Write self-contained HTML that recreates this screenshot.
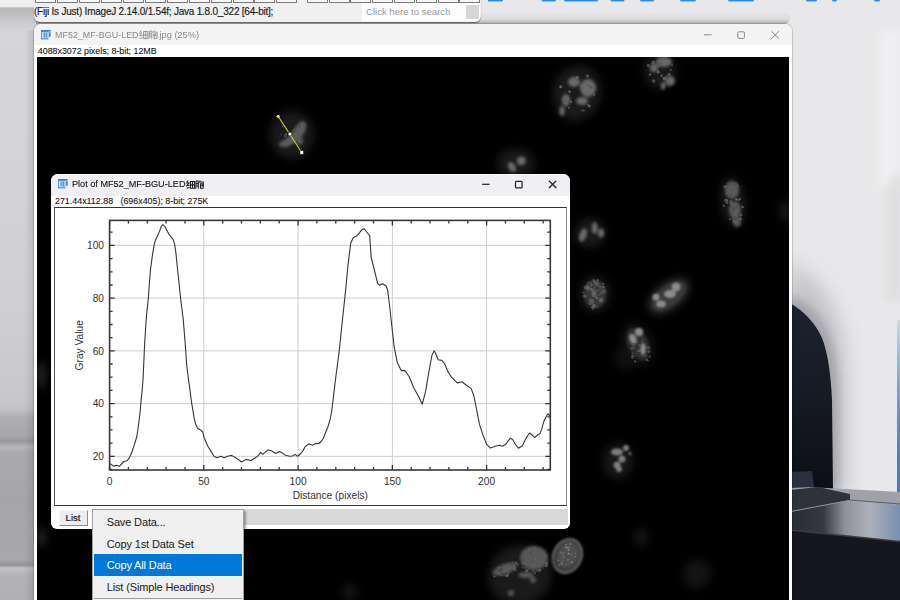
<!DOCTYPE html>
<html><head><meta charset="utf-8">
<style>
*{box-sizing:border-box}
html,body{margin:0;padding:0}
body{width:900px;height:600px;overflow:hidden;position:relative;background:#e4e4e6;font-family:"Liberation Sans",sans-serif}
.a{position:absolute}
.t{position:absolute;white-space:pre;line-height:1}
</style></head><body>

<!-- desktop left strip -->
<div class="a" style="left:0;top:0;width:40px;height:600px;background:linear-gradient(#d6d6da 0px,#d4d4d8 150px,#d0d0d4 300px,#c8c8cc 400px,#c2c2c6 410px,#aeaeb2 418px,#a8a8ac 436px,#98989c 441px,#b6b6ba 447px,#aaaaae 453px,#a6a6aa 500px,#a8a8ac 560px,#949498 565px,#c2c2c6 568px,#b4b4b8 575px,#b0b0b4 600px)"></div><div class="a" style="left:24px;top:22px;width:12px;height:578px;background:linear-gradient(90deg,rgba(0,0,0,0),rgba(0,0,0,.12))"></div>
<div class="a" style="left:0;top:0;width:40px;height:30px;background:linear-gradient(#f0f0f0 0px,#eeeeee 6.5px,#b8b8b8 8px,#bababb 11px,#c4c4c6 18px,#cdcdd0 24px,#d4d4d8 30px)"></div>


<!-- desktop right -->
<div class="a" style="left:480px;top:0;width:420px;height:30px;background:#e8e8ea"></div>
<svg class="a" style="left:0;top:0" width="900" height="600" viewBox="0 0 900 600">
<defs>
<filter id="sh8" color-interpolation-filters="sRGB" filterUnits="userSpaceOnUse" x="0" y="0" width="900" height="600"><feGaussianBlur stdDeviation="9"/></filter>
<filter id="sh2" color-interpolation-filters="sRGB" filterUnits="userSpaceOnUse" x="0" y="0" width="900" height="600"><feGaussianBlur stdDeviation="1.2"/></filter><filter id="sh4" color-interpolation-filters="sRGB" filterUnits="userSpaceOnUse" x="0" y="0" width="900" height="600"><feGaussianBlur stdDeviation="4"/></filter><filter id="sh1" color-interpolation-filters="sRGB" filterUnits="userSpaceOnUse" x="0" y="0" width="900" height="600"><feGaussianBlur stdDeviation="0.7"/></filter>
<linearGradient id="archg" x1="0" x2="0" y1="0" y2="1"><stop offset="0" stop-color="#1e2230"/><stop offset="0.5" stop-color="#161a24"/><stop offset="1" stop-color="#0c0e14"/></linearGradient><linearGradient id="blueg" x1="0" x2="0" y1="0" y2="1"><stop offset="0" stop-color="#d0d8e4"/><stop offset="0.3" stop-color="#7aa0d0"/><stop offset="0.6" stop-color="#4a80c8"/><stop offset="1" stop-color="#3a76c4"/></linearGradient><linearGradient id="wpan" x1="0" x2="1" y1="0" y2="0"><stop offset="0" stop-color="#e6e6e8"/><stop offset="0.5" stop-color="#eeeeef"/><stop offset="1" stop-color="#e2e2e4"/></linearGradient>
<linearGradient id="surf" x1="0" x2="1" y1="0" y2="0"><stop offset="0" stop-color="#2a2c34"/><stop offset="0.3" stop-color="#363840"/><stop offset="0.5" stop-color="#8e9199"/><stop offset="0.72" stop-color="#adb0b8"/><stop offset="1" stop-color="#7890b0"/></linearGradient>
</defs>
<rect x="790" y="20" width="110" height="580" fill="#e8e8ea"/>
<rect x="878" y="30" width="24" height="160" fill="#efeff1" filter="url(#sh4)"/><path d="M902 170 Q890 178 886 192 L886 300 L902 300 Z" fill="#dedee0" filter="url(#sh4)"/>
<!-- arch shadow -->
<path d="M790 262 Q830 282 842 330 Q848 362 848 400 L848 492 L790 492 Z" fill="#c6c6ca" filter="url(#sh8)"/>
<path d="M790 294 Q820 308 830 336 Q838 360 838 400 L838 492 L790 492 Z" fill="#a4a4aa" filter="url(#sh4)"/>
<!-- arch dark -->
<path d="M790 303 Q812 316 822 338 Q830 358 832 400 L833 492 L790 492 Z" fill="url(#archg)" filter="url(#sh1)"/>
<!-- blue strip -->
<rect x="897" y="320" width="3" height="225" fill="url(#blueg)"/>
<!-- platform -->
<path d="M790 486 L900 492 L900 505 L790 500 Z" fill="#9ea1a8"/>
<path d="M790 490 L818 487 L850 494 L850 500 L790 512 Z" fill="#30323a"/>
<path d="M790 472 L812 471 L814 487 L790 488 Z" fill="#2a3040"/>
<path d="M790 512 L850 500 L900 505 L900 541 L790 530 Z" fill="url(#surf)"/>
<path d="M790 511.6 L849.6 500.4" stroke="#8a8e98" stroke-width="1"/>
<path d="M850 500 L900 504" stroke="#4a4c52" stroke-width="0.8"/>
<path d="M790 530 L900 541.5 L900 600 L790 600 Z" fill="#16171d"/>
<path d="M790 530 L900 541.5" stroke="#3a3c44" stroke-width="1.5"/>
</svg>

<!-- blue letters -->
<svg class="a" style="left:0;top:0" width="900" height="10" viewBox="0 0 900 10"><g fill="#2f8ae0"><rect x="487.7" y="-3" width="15.3" height="4.6" rx="1.5"/><rect x="541.5" y="-3" width="14.5" height="4.6" rx="1.5"/><rect x="564" y="-3" width="34.0" height="4.6" rx="1.5"/><rect x="610.5" y="-3" width="14.0" height="4.6" rx="1.5"/><rect x="640" y="-3" width="14.0" height="4.6" rx="1.5"/><rect x="680" y="-3" width="16.0" height="4.6" rx="1.5"/><rect x="728" y="-3" width="26.0" height="4.6" rx="1.5"/><rect x="806" y="-3" width="11.0" height="4.6" rx="1.5"/><rect x="832" y="-3" width="5.0" height="4.6" rx="1.5"/><rect x="874" y="-3" width="6.0" height="4.6" rx="1.5"/></g></svg>
<div class="a" style="left:36px;top:12px;width:754px;height:12px;border-radius:0 0 6px 0;background:linear-gradient(rgba(0,0,0,0),rgba(0,0,0,.06) 60%,rgba(0,0,0,.25))"></div>
<!-- ImageJ main toolbar window -->
<div class="a" id="ij" style="left:34px;top:-6px;width:447px;height:28px;background:#f0f0f0;border-radius:0 0 6px 6px;box-shadow:0 1px 1px rgba(0,0,0,.45)"></div>
<div class="a" style="left:35.0px;top:-4px;width:21px;height:6.5px;border:1px solid #7a7a7a;border-top:none;border-radius:0 0 1px 1px;background:#f7f7f7"></div>
<div class="a" style="left:56.9px;top:-4px;width:21px;height:6.5px;border:1px solid #7a7a7a;border-top:none;border-radius:0 0 1px 1px;background:#f7f7f7"></div>
<div class="a" style="left:78.9px;top:-4px;width:21px;height:6.5px;border:1px solid #7a7a7a;border-top:none;border-radius:0 0 1px 1px;background:#f7f7f7"></div>
<div class="a" style="left:100.8px;top:-4px;width:21px;height:6.5px;border:1px solid #7a7a7a;border-top:none;border-radius:0 0 1px 1px;background:#f7f7f7"></div>
<div class="a" style="left:122.8px;top:-4px;width:21px;height:6.5px;border:1px solid #7a7a7a;border-top:none;border-radius:0 0 1px 1px;background:#f7f7f7"></div>
<div class="a" style="left:144.7px;top:-4px;width:21px;height:6.5px;border:1px solid #7a7a7a;border-top:none;border-radius:0 0 1px 1px;background:#f7f7f7"></div>
<div class="a" style="left:166.6px;top:-4px;width:21px;height:6.5px;border:1px solid #7a7a7a;border-top:none;border-radius:0 0 1px 1px;background:#f7f7f7"></div>
<div class="a" style="left:188.6px;top:-4px;width:21px;height:6.5px;border:1px solid #7a7a7a;border-top:none;border-radius:0 0 1px 1px;background:#f7f7f7"></div>
<div class="a" style="left:210.5px;top:-4px;width:21px;height:6.5px;border:1px solid #7a7a7a;border-top:none;border-radius:0 0 1px 1px;background:#f7f7f7"></div>
<div class="a" style="left:232.5px;top:-4px;width:21px;height:6.5px;border:1px solid #7a7a7a;border-top:none;border-radius:0 0 1px 1px;background:#f7f7f7"></div>
<div class="a" style="left:254.4px;top:-4px;width:21px;height:6.5px;border:1px solid #7a7a7a;border-top:none;border-radius:0 0 1px 1px;background:#f7f7f7"></div>
<div class="a" style="left:276.3px;top:-4px;width:21px;height:6.5px;border:1px solid #7a7a7a;border-top:none;border-radius:0 0 1px 1px;background:#f7f7f7"></div>
<div class="a" style="left:306.7px;top:-4px;width:21px;height:6.5px;border:1px solid #7a7a7a;border-top:none;border-radius:0 0 1px 1px;background:#f7f7f7"></div>
<div class="a" style="left:328.5px;top:-4px;width:21px;height:6.5px;border:1px solid #7a7a7a;border-top:none;border-radius:0 0 1px 1px;background:#f7f7f7"></div>
<div class="a" style="left:350.3px;top:-4px;width:21px;height:6.5px;border:1px solid #7a7a7a;border-top:none;border-radius:0 0 1px 1px;background:#f7f7f7"></div>
<div class="a" style="left:372.1px;top:-4px;width:21px;height:6.5px;border:1px solid #7a7a7a;border-top:none;border-radius:0 0 1px 1px;background:#f7f7f7"></div>
<div class="a" style="left:393.9px;top:-4px;width:21px;height:6.5px;border:1px solid #7a7a7a;border-top:none;border-radius:0 0 1px 1px;background:#f7f7f7"></div>
<div class="a" style="left:415.7px;top:-4px;width:21px;height:6.5px;border:1px solid #7a7a7a;border-top:none;border-radius:0 0 1px 1px;background:#f7f7f7"></div>
<div class="a" style="left:437.5px;top:-4px;width:21px;height:6.5px;border:1px solid #7a7a7a;border-top:none;border-radius:0 0 1px 1px;background:#f7f7f7"></div>
<div class="a" style="left:459.3px;top:-4px;width:21px;height:6.5px;border:1px solid #7a7a7a;border-top:none;border-radius:0 0 1px 1px;background:#f7f7f7"></div>
<div class="t" style="left:34px;top:6.9px;font-size:10px;letter-spacing:-0.22px;color:#1a1a1a;-webkit-text-stroke:0.15px #1a1a1a">(Fiji Is Just) ImageJ 2.14.0/1.54f; Java 1.8.0_322 [64-bit];</div>
<div class="a" style="left:362px;top:3px;width:118px;height:18px;background:#fdfdfd;border-radius:0 0 5px 0"></div>
<div class="a" style="left:466px;top:5px;width:13px;height:14px;background:#d6d6d6"></div>
<div class="t" style="left:366px;top:7.2px;font-size:9.56px;color:#9a9a9a">Click here to search</div>

<!-- image window -->
<div class="a" id="imgwin" style="left:34px;top:24px;width:758px;height:590px;background:#ffffff;border-radius:7px 7px 0 0;box-shadow:0 0 0 0.7px rgba(0,0,0,.16),0 0 3px rgba(0,0,0,.14)">
  <div class="a" style="left:0;top:0;width:758px;height:21px;background:#f3f3f3;border-radius:7px 7px 0 0"></div>
  <div class="a" style="left:3px;top:33px;width:752px;height:560px;background:#000"></div>
</div>


<!-- cells -->
<svg class="a" style="left:0;top:0" width="900" height="600" viewBox="0 0 900 600">
<defs>
<filter id="b3" color-interpolation-filters="sRGB" filterUnits="userSpaceOnUse" x="0" y="0" width="900" height="600"><feGaussianBlur stdDeviation="4.5"/></filter>
<filter id="b15" color-interpolation-filters="sRGB" filterUnits="userSpaceOnUse" x="0" y="0" width="900" height="600"><feGaussianBlur stdDeviation="1.5"/></filter>
<filter id="b05" color-interpolation-filters="sRGB" filterUnits="userSpaceOnUse" x="0" y="0" width="900" height="600"><feGaussianBlur stdDeviation="0.75"/></filter>
<filter id="b08" color-interpolation-filters="sRGB" filterUnits="userSpaceOnUse" x="0" y="0" width="900" height="600"><feGaussianBlur stdDeviation="0.8"/></filter>
<clipPath id="imgclip"><rect x="37" y="57" width="752" height="543"/></clipPath>
</defs>
<g clip-path="url(#imgclip)">
<!-- cell with line -->
<g filter="url(#b3)"><ellipse cx="292" cy="135" rx="22" ry="24" fill="#1a1a1a"/></g>
<g filter="url(#b15)" fill="#5c5c5c"><path d="M302 121 Q308 122 306 128 Q305 134 300 138 Q296 143 291 145 Q284 149 280 146 Q277 144 282 141 Q289 137 292 133 Q295 127 298 124Z"/><ellipse cx="287" cy="144" rx="6" ry="2.5" transform="rotate(-20 287 144)"/><ellipse cx="300" cy="141" rx="3" ry="4"/></g>
<!-- cell A -->
<g filter="url(#b3)"><ellipse cx="577" cy="93" rx="24" ry="28" transform="rotate(15 577 93)" fill="#1a1a1a"/></g>
<g filter="url(#b15)" fill="#6a6a6a"><ellipse cx="588" cy="88" rx="8" ry="9"/><ellipse cx="574" cy="82" rx="6" ry="5"/><ellipse cx="566" cy="100" rx="4" ry="6"/><ellipse cx="582" cy="101" rx="6" ry="4"/><ellipse cx="562" cy="111" rx="2.5" ry="5"/></g>
<!-- cell B -->
<g filter="url(#b3)"><ellipse cx="660" cy="70" rx="16" ry="18" fill="#1a1a1a"/></g>
<g filter="url(#b15)" fill="#6a6a6a"><ellipse cx="664" cy="62" rx="8" ry="5"/><ellipse cx="670" cy="81" rx="5" ry="5"/><ellipse cx="654" cy="68" rx="4" ry="4"/><ellipse cx="663" cy="86" rx="2" ry="4"/></g>
<!-- cell C -->
<g filter="url(#b3)"><ellipse cx="516" cy="163" rx="19" ry="14" fill="#1a1a1a"/></g>
<g filter="url(#b15)" fill="#6a6a6a"><circle cx="521.3" cy="160.9" r="4.5"/><ellipse cx="512" cy="167" rx="3.5" ry="5.5" transform="rotate(-30 512 167)"/></g>
<!-- cell D -->
<g filter="url(#b3)"><ellipse cx="733" cy="202" rx="12" ry="25" transform="rotate(-8 733 202)" fill="#1a1a1a"/></g>
<g filter="url(#b15)" fill="#5a5a5a"><ellipse cx="732" cy="190" rx="7" ry="9"/><ellipse cx="735" cy="210" rx="6" ry="9"/><ellipse cx="737" cy="222" rx="4" ry="5"/></g>
<g filter="url(#b3)"><ellipse cx="786" cy="211" rx="6" ry="11" fill="#1a1a1a"/></g>
<!-- cell E -->
<g filter="url(#b3)"><ellipse cx="590" cy="233" rx="15" ry="15" fill="#1a1a1a"/></g>
<g filter="url(#b15)" fill="#6a6a6a"><ellipse cx="583" cy="235" rx="3.5" ry="7" transform="rotate(20 583 235)"/><ellipse cx="594.7" cy="228" rx="3" ry="6"/><ellipse cx="601" cy="233" rx="3" ry="4.5"/></g>
<!-- cell F -->
<g filter="url(#b3)"><ellipse cx="595" cy="294" rx="15" ry="18" fill="#1a1a1a"/></g>
<g filter="url(#b15)" fill="#363636"><ellipse cx="595" cy="294" rx="11" ry="14"/></g>
<g filter="url(#b08)" fill="#7a7a7a"><circle cx="588" cy="288" r="2"/><circle cx="597" cy="284" r="1.8"/><circle cx="601" cy="300" r="2"/><circle cx="592" cy="302" r="1.8"/><circle cx="594" cy="293" r="2.2"/><circle cx="604" cy="291" r="1.5"/></g>
<!-- cell G -->
<g filter="url(#b3)"><ellipse cx="669" cy="296" rx="24" ry="13" transform="rotate(-38 669 296)" fill="#303030"/></g>
<g filter="url(#b15)"><ellipse cx="669" cy="296" rx="20" ry="10" transform="rotate(-38 669 296)" fill="#3a3a3a"/></g>
<g filter="url(#b08)" fill="#8c8c8c"><circle cx="656" cy="297" r="3.5"/><ellipse cx="661" cy="304" rx="5" ry="3.5"/><ellipse cx="670" cy="294" rx="6" ry="4"/><circle cx="676" cy="287" r="4.5"/></g>
<!-- cell H -->
<g filter="url(#b3)"><ellipse cx="626" cy="358" rx="12" ry="12" fill="#0f0f0f"/><ellipse cx="638" cy="344" rx="15" ry="22" transform="rotate(-25 638 344)" fill="#121212"/></g>
<g filter="url(#b15)" fill="#303030"><ellipse cx="638" cy="344" rx="10" ry="17" transform="rotate(-25 638 344)"/></g>
<g filter="url(#b08)" fill="#8a8a8a"><circle cx="639" cy="332" r="4"/><ellipse cx="633" cy="339" rx="3.5" ry="5.5" transform="rotate(-20 633 339)"/><ellipse cx="643" cy="349" rx="2.8" ry="6"/></g>
<!-- cell I -->
<g filter="url(#b3)"><ellipse cx="618" cy="461" rx="15" ry="18" fill="#181818"/></g>
<g filter="url(#b08)" fill="#7e7e7e"><ellipse cx="617" cy="452" rx="6" ry="3.5"/><circle cx="626" cy="448" r="3"/><circle cx="622" cy="459" r="3.5"/><circle cx="617" cy="465" r="3.5"/><circle cx="619" cy="469" r="3"/><circle cx="630" cy="453.5" r="1.5"/></g>
<!-- cell J -->
<g filter="url(#b15)"><ellipse cx="567.3" cy="556" rx="15" ry="18.5" transform="rotate(25 567.3 556)" fill="#3c3c3c"/></g>
<g filter="url(#b08)"><ellipse cx="567.3" cy="556" rx="13.5" ry="17" transform="rotate(25 567.3 556)" fill="none" stroke="#5e5e5e" stroke-width="2.2"/><ellipse cx="568" cy="555" rx="10" ry="13" transform="rotate(25 568 555)" fill="#4e4e4e"/></g>
<!-- cell K -->
<g filter="url(#b3)"><ellipse cx="520" cy="575" rx="32" ry="30" transform="rotate(-20 520 575)" fill="#1a1a1a"/></g>
<g filter="url(#b15)" fill="#585858"><ellipse cx="534" cy="558" rx="14" ry="12"/><ellipse cx="505" cy="569" rx="13" ry="5" transform="rotate(-20 505 569)"/><circle cx="533" cy="580" r="3"/><circle cx="511" cy="593" r="3"/><ellipse cx="526" cy="575" rx="8" ry="3"/></g>
<!-- speckles -->
<g filter="url(#b05)"><circle cx="590.8" cy="282.8" r="1.5" fill="#484848"/><circle cx="597.0" cy="307.1" r="1.0" fill="#484848"/><circle cx="593.4" cy="280.2" r="0.9" fill="#606060"/><circle cx="584.4" cy="296.1" r="1.7" fill="#484848"/><circle cx="596.9" cy="290.7" r="1.8" fill="#484848"/><circle cx="596.4" cy="282.3" r="1.2" fill="#484848"/><circle cx="596.7" cy="295.9" r="1.5" fill="#484848"/><circle cx="597.0" cy="298.4" r="1.2" fill="#484848"/><circle cx="596.5" cy="297.8" r="1.3" fill="#606060"/><circle cx="601.7" cy="292.9" r="1.7" fill="#585858"/><circle cx="590.2" cy="303.4" r="1.5" fill="#505050"/><circle cx="585.0" cy="287.6" r="1.3" fill="#585858"/><circle cx="600.5" cy="287.2" r="1.8" fill="#484848"/><circle cx="595.3" cy="283.3" r="1.1" fill="#606060"/><circle cx="593.1" cy="308.8" r="0.9" fill="#585858"/><circle cx="591.2" cy="289.2" r="1.3" fill="#606060"/><circle cx="589.5" cy="300.3" r="0.9" fill="#585858"/><circle cx="602.7" cy="287.1" r="1.2" fill="#585858"/><circle cx="583.5" cy="292.8" r="1.0" fill="#484848"/><circle cx="594.8" cy="285.0" r="1.1" fill="#505050"/><circle cx="592.5" cy="307.3" r="1.3" fill="#505050"/><circle cx="593.8" cy="295.6" r="1.7" fill="#606060"/><circle cx="603.7" cy="286.9" r="1.2" fill="#585858"/><circle cx="599.4" cy="290.2" r="1.0" fill="#484848"/><circle cx="587.2" cy="285.4" r="1.0" fill="#606060"/><circle cx="602.9" cy="283.8" r="1.1" fill="#505050"/><circle cx="593.1" cy="289.8" r="1.4" fill="#505050"/><circle cx="599.6" cy="294.5" r="1.4" fill="#484848"/><circle cx="594.0" cy="305.9" r="1.8" fill="#606060"/><circle cx="592.6" cy="290.6" r="1.3" fill="#606060"/><circle cx="588.0" cy="283.2" r="1.1" fill="#484848"/><circle cx="585.5" cy="296.1" r="1.3" fill="#585858"/><circle cx="597.7" cy="280.3" r="1.0" fill="#606060"/><circle cx="586.6" cy="286.1" r="1.1" fill="#585858"/><circle cx="594.4" cy="281.7" r="1.3" fill="#606060"/><circle cx="594.5" cy="288.0" r="0.9" fill="#585858"/><circle cx="600.8" cy="293.3" r="1.5" fill="#484848"/><circle cx="591.7" cy="300.1" r="1.7" fill="#585858"/><circle cx="599.7" cy="286.4" r="1.2" fill="#505050"/><circle cx="591.5" cy="285.1" r="1.3" fill="#585858"/><circle cx="736.4" cy="206.6" r="1.6" fill="#505050"/><circle cx="741.0" cy="215.0" r="1.5" fill="#505050"/><circle cx="727.0" cy="202.5" r="1.5" fill="#484848"/><circle cx="738.6" cy="200.0" r="1.0" fill="#585858"/><circle cx="734.6" cy="221.2" r="1.8" fill="#585858"/><circle cx="731.4" cy="195.0" r="1.3" fill="#484848"/><circle cx="733.5" cy="208.7" r="1.6" fill="#484848"/><circle cx="732.1" cy="211.5" r="1.0" fill="#505050"/><circle cx="732.5" cy="208.1" r="0.9" fill="#606060"/><circle cx="733.8" cy="212.7" r="0.9" fill="#505050"/><circle cx="724.2" cy="186.7" r="1.0" fill="#606060"/><circle cx="736.9" cy="185.7" r="1.6" fill="#606060"/><circle cx="735.2" cy="195.0" r="1.3" fill="#505050"/><circle cx="735.1" cy="184.1" r="1.5" fill="#505050"/><circle cx="734.0" cy="218.4" r="1.6" fill="#505050"/><circle cx="734.6" cy="213.5" r="1.1" fill="#606060"/><circle cx="740.2" cy="218.7" r="1.5" fill="#606060"/><circle cx="735.5" cy="218.2" r="1.6" fill="#484848"/><circle cx="736.3" cy="186.0" r="0.9" fill="#484848"/><circle cx="733.1" cy="194.3" r="1.3" fill="#606060"/><circle cx="736.2" cy="184.0" r="1.4" fill="#505050"/><circle cx="724.7" cy="201.0" r="0.8" fill="#484848"/><circle cx="732.6" cy="207.1" r="1.3" fill="#505050"/><circle cx="736.5" cy="199.4" r="1.3" fill="#606060"/><circle cx="731.6" cy="191.0" r="1.3" fill="#585858"/><circle cx="726.8" cy="200.5" r="1.2" fill="#606060"/><circle cx="729.2" cy="183.5" r="1.0" fill="#484848"/><circle cx="726.1" cy="194.2" r="0.9" fill="#505050"/><circle cx="742.6" cy="207.0" r="1.2" fill="#585858"/><circle cx="730.9" cy="201.7" r="1.8" fill="#505050"/><circle cx="725.9" cy="200.0" r="1.3" fill="#585858"/><circle cx="730.6" cy="196.0" r="0.9" fill="#585858"/><circle cx="723.8" cy="205.7" r="1.2" fill="#484848"/><circle cx="730.8" cy="203.1" r="1.1" fill="#484848"/><circle cx="729.9" cy="219.2" r="0.9" fill="#585858"/><circle cx="726.2" cy="186.5" r="1.2" fill="#585858"/><circle cx="731.4" cy="203.9" r="1.3" fill="#606060"/><circle cx="734.5" cy="183.6" r="0.9" fill="#505050"/><circle cx="728.9" cy="183.6" r="1.7" fill="#484848"/><circle cx="739.9" cy="199.0" r="1.1" fill="#606060"/><circle cx="671.9" cy="65.0" r="0.9" fill="#505050"/><circle cx="653.3" cy="62.4" r="1.7" fill="#585858"/><circle cx="660.9" cy="63.2" r="1.2" fill="#505050"/><circle cx="653.6" cy="81.1" r="1.8" fill="#484848"/><circle cx="661.4" cy="62.7" r="1.3" fill="#606060"/><circle cx="658.1" cy="71.9" r="1.6" fill="#606060"/><circle cx="652.0" cy="63.9" r="1.0" fill="#505050"/><circle cx="657.3" cy="67.4" r="0.9" fill="#505050"/><circle cx="670.6" cy="69.9" r="0.9" fill="#606060"/><circle cx="670.4" cy="77.1" r="1.1" fill="#505050"/><circle cx="665.4" cy="58.4" r="1.0" fill="#585858"/><circle cx="658.5" cy="64.9" r="1.8" fill="#585858"/><circle cx="654.7" cy="67.7" r="0.8" fill="#606060"/><circle cx="648.3" cy="65.4" r="1.5" fill="#505050"/><circle cx="660.1" cy="57.1" r="1.1" fill="#484848"/><circle cx="650.0" cy="74.6" r="1.2" fill="#585858"/><circle cx="654.5" cy="64.0" r="1.4" fill="#505050"/><circle cx="664.4" cy="78.5" r="1.7" fill="#606060"/><circle cx="667.4" cy="78.6" r="1.3" fill="#585858"/><circle cx="666.3" cy="76.3" r="0.8" fill="#606060"/><circle cx="666.5" cy="81.4" r="0.9" fill="#484848"/><circle cx="669.1" cy="74.5" r="1.7" fill="#505050"/><circle cx="663.8" cy="85.8" r="1.2" fill="#606060"/><circle cx="661.6" cy="75.8" r="1.4" fill="#505050"/><circle cx="659.7" cy="57.1" r="1.6" fill="#484848"/><circle cx="587.5" cy="76.0" r="1.4" fill="#585858"/><circle cx="583.8" cy="110.6" r="1.0" fill="#505050"/><circle cx="565.9" cy="96.9" r="1.2" fill="#606060"/><circle cx="585.1" cy="81.4" r="1.3" fill="#585858"/><circle cx="565.7" cy="101.0" r="1.0" fill="#505050"/><circle cx="567.0" cy="98.2" r="1.4" fill="#606060"/><circle cx="569.5" cy="91.8" r="1.2" fill="#606060"/><circle cx="580.9" cy="85.5" r="0.9" fill="#606060"/><circle cx="560.7" cy="86.8" r="1.5" fill="#606060"/><circle cx="588.3" cy="85.2" r="1.1" fill="#585858"/><circle cx="588.1" cy="105.2" r="1.0" fill="#606060"/><circle cx="577.2" cy="77.5" r="1.6" fill="#606060"/><circle cx="571.1" cy="101.8" r="1.1" fill="#606060"/><circle cx="566.7" cy="105.7" r="0.8" fill="#585858"/><circle cx="589.4" cy="106.0" r="1.5" fill="#585858"/><circle cx="569.0" cy="107.7" r="0.9" fill="#606060"/><circle cx="581.9" cy="110.4" r="1.0" fill="#484848"/><circle cx="591.1" cy="87.0" r="1.5" fill="#505050"/><circle cx="594.1" cy="94.7" r="1.1" fill="#585858"/><circle cx="587.7" cy="92.6" r="0.8" fill="#606060"/><circle cx="535.4" cy="565.7" r="0.8" fill="#606060"/><circle cx="532.6" cy="566.6" r="1.3" fill="#585858"/><circle cx="533.6" cy="570.7" r="1.2" fill="#505050"/><circle cx="533.2" cy="555.9" r="1.0" fill="#585858"/><circle cx="531.4" cy="553.2" r="1.2" fill="#606060"/><circle cx="523.4" cy="563.7" r="0.9" fill="#606060"/><circle cx="535.4" cy="558.8" r="1.1" fill="#606060"/><circle cx="532.0" cy="561.2" r="1.0" fill="#505050"/><circle cx="529.6" cy="549.4" r="1.0" fill="#585858"/><circle cx="542.7" cy="552.3" r="0.8" fill="#606060"/><circle cx="530.7" cy="566.4" r="1.0" fill="#585858"/><circle cx="529.5" cy="548.6" r="1.0" fill="#585858"/><circle cx="523.5" cy="560.1" r="1.3" fill="#505050"/><circle cx="530.8" cy="563.8" r="1.1" fill="#585858"/><circle cx="539.9" cy="570.3" r="1.2" fill="#606060"/><circle cx="527.0" cy="549.8" r="0.9" fill="#484848"/><circle cx="546.4" cy="565.8" r="1.3" fill="#606060"/><circle cx="522.4" cy="567.2" r="0.8" fill="#505050"/><circle cx="526.5" cy="570.9" r="1.3" fill="#585858"/><circle cx="546.9" cy="563.3" r="1.2" fill="#606060"/><circle cx="539.6" cy="549.9" r="0.9" fill="#505050"/><circle cx="530.9" cy="552.8" r="1.3" fill="#484848"/><circle cx="535.0" cy="572.9" r="1.0" fill="#585858"/><circle cx="538.0" cy="570.0" r="1.2" fill="#505050"/><circle cx="535.3" cy="547.8" r="1.1" fill="#585858"/><circle cx="544.8" cy="563.8" r="0.9" fill="#505050"/><circle cx="538.7" cy="571.1" r="1.0" fill="#484848"/><circle cx="539.5" cy="565.7" r="1.1" fill="#606060"/><circle cx="525.5" cy="567.7" r="1.4" fill="#484848"/><circle cx="528.7" cy="568.3" r="1.0" fill="#505050"/><circle cx="527.4" cy="570.1" r="0.9" fill="#606060"/><circle cx="537.1" cy="570.3" r="1.2" fill="#484848"/><circle cx="531.0" cy="552.5" r="1.6" fill="#505050"/><circle cx="531.6" cy="565.5" r="0.9" fill="#606060"/><circle cx="546.1" cy="555.6" r="0.9" fill="#606060"/><circle cx="494.4" cy="576.3" r="1.1" fill="#585858"/><circle cx="518.5" cy="564.7" r="0.9" fill="#484848"/><circle cx="499.6" cy="570.4" r="1.6" fill="#484848"/><circle cx="508.7" cy="572.3" r="1.1" fill="#585858"/><circle cx="514.2" cy="566.2" r="0.8" fill="#606060"/><circle cx="498.2" cy="573.4" r="1.2" fill="#585858"/><circle cx="504.1" cy="575.8" r="0.8" fill="#606060"/><circle cx="499.9" cy="573.8" r="1.1" fill="#606060"/><circle cx="516.1" cy="563.2" r="1.4" fill="#585858"/><circle cx="501.7" cy="569.5" r="1.6" fill="#484848"/><circle cx="500.6" cy="574.7" r="1.1" fill="#585858"/><circle cx="501.6" cy="574.4" r="1.3" fill="#484848"/><circle cx="507.2" cy="575.4" r="1.6" fill="#606060"/><circle cx="512.8" cy="562.8" r="1.2" fill="#484848"/><circle cx="514.9" cy="569.8" r="1.5" fill="#505050"/><circle cx="508.1" cy="567.0" r="1.1" fill="#585858"/><circle cx="513.9" cy="568.4" r="1.2" fill="#606060"/><circle cx="511.6" cy="564.7" r="0.9" fill="#484848"/><circle cx="505.7" cy="570.7" r="0.9" fill="#606060"/><circle cx="498.1" cy="567.6" r="0.9" fill="#606060"/><circle cx="566.1" cy="544.6" r="0.9" fill="#7a7a7a"/><circle cx="562.8" cy="554.7" r="1.1" fill="#6a6a6a"/><circle cx="575.3" cy="553.5" r="0.8" fill="#727272"/><circle cx="563.1" cy="560.5" r="0.7" fill="#6a6a6a"/><circle cx="565.2" cy="547.1" r="0.8" fill="#7a7a7a"/><circle cx="566.3" cy="547.9" r="0.9" fill="#7a7a7a"/><circle cx="571.9" cy="562.2" r="1.2" fill="#6a6a6a"/><circle cx="563.7" cy="552.5" r="0.8" fill="#727272"/><circle cx="566.2" cy="564.6" r="0.7" fill="#6a6a6a"/><circle cx="561.7" cy="563.5" r="0.9" fill="#727272"/><circle cx="571.2" cy="562.2" r="0.6" fill="#7a7a7a"/><circle cx="568.4" cy="559.6" r="0.7" fill="#727272"/><circle cx="570.1" cy="543.9" r="1.2" fill="#6a6a6a"/><circle cx="568.1" cy="560.4" r="0.7" fill="#6a6a6a"/><circle cx="574.8" cy="556.6" r="0.8" fill="#7a7a7a"/><circle cx="567.9" cy="547.4" r="1.1" fill="#7a7a7a"/><circle cx="568.7" cy="553.7" r="1.1" fill="#7a7a7a"/><circle cx="567.4" cy="559.7" r="0.7" fill="#6a6a6a"/><circle cx="568.7" cy="549.7" r="1.2" fill="#7a7a7a"/><circle cx="559.5" cy="565.1" r="0.8" fill="#7a7a7a"/><circle cx="575.9" cy="557.2" r="0.6" fill="#727272"/><circle cx="571.8" cy="554.6" r="0.8" fill="#6a6a6a"/><circle cx="570.6" cy="547.4" r="0.7" fill="#6a6a6a"/><circle cx="562.1" cy="564.2" r="0.9" fill="#6a6a6a"/><circle cx="558.2" cy="560.2" r="0.8" fill="#7a7a7a"/><circle cx="571.6" cy="554.0" r="0.9" fill="#6a6a6a"/><circle cx="569.0" cy="546.7" r="0.7" fill="#6a6a6a"/><circle cx="561.0" cy="552.5" r="1.1" fill="#6a6a6a"/><circle cx="560.7" cy="562.3" r="0.6" fill="#727272"/><circle cx="563.5" cy="557.0" r="1.0" fill="#6a6a6a"/><circle cx="648.8" cy="351.6" r="1.3" fill="#505050"/><circle cx="646.8" cy="359.9" r="1.1" fill="#505050"/><circle cx="642.2" cy="341.2" r="0.8" fill="#606060"/><circle cx="633.3" cy="344.3" r="1.4" fill="#505050"/><circle cx="632.4" cy="357.5" r="1.2" fill="#484848"/><circle cx="641.0" cy="346.1" r="0.9" fill="#606060"/><circle cx="642.4" cy="354.8" r="0.8" fill="#606060"/><circle cx="633.6" cy="347.3" r="0.9" fill="#585858"/><circle cx="638.3" cy="350.9" r="0.6" fill="#606060"/><circle cx="638.7" cy="350.9" r="1.1" fill="#606060"/><circle cx="649.8" cy="357.0" r="0.9" fill="#484848"/><circle cx="632.4" cy="353.4" r="0.7" fill="#606060"/><circle cx="641.9" cy="355.9" r="0.6" fill="#505050"/><circle cx="635.2" cy="361.5" r="1.2" fill="#484848"/><circle cx="632.0" cy="355.9" r="0.9" fill="#505050"/><circle cx="644.3" cy="355.9" r="0.7" fill="#505050"/><circle cx="648.6" cy="347.7" r="1.4" fill="#505050"/><circle cx="646.0" cy="356.0" r="0.8" fill="#585858"/><circle cx="639.1" cy="344.8" r="0.9" fill="#585858"/><circle cx="646.8" cy="347.5" r="0.8" fill="#606060"/><circle cx="631.9" cy="348.4" r="1.0" fill="#585858"/><circle cx="634.1" cy="345.4" r="0.9" fill="#585858"/><circle cx="647.9" cy="360.5" r="0.7" fill="#585858"/><circle cx="633.4" cy="356.0" r="1.1" fill="#585858"/><circle cx="647.9" cy="346.9" r="1.0" fill="#484848"/><circle cx="286.0" cy="133.9" r="1.2" fill="#484848"/><circle cx="293.9" cy="129.6" r="1.1" fill="#484848"/><circle cx="285.5" cy="135.8" r="1.3" fill="#484848"/><circle cx="299.7" cy="127.1" r="1.0" fill="#484848"/><circle cx="297.6" cy="138.9" r="0.8" fill="#484848"/><circle cx="294.8" cy="131.4" r="1.0" fill="#4a4a4a"/><circle cx="283.2" cy="126.5" r="1.1" fill="#4a4a4a"/><circle cx="281.3" cy="134.6" r="0.8" fill="#484848"/><circle cx="292.8" cy="130.9" r="0.8" fill="#4a4a4a"/><circle cx="284.9" cy="136.0" r="0.9" fill="#4a4a4a"/><circle cx="297.0" cy="131.8" r="0.6" fill="#4a4a4a"/><circle cx="300.9" cy="139.8" r="0.9" fill="#484848"/></g>
<!-- line roi -->
<path d="M278.3 116.5 L301.7 152.5" stroke="#d2ca2c" stroke-width="1.15"/>
<circle cx="278.1" cy="116.3" r="1.6" fill="#e8e040"/>
<rect x="288.2" y="132.5" width="3.3" height="3.3" fill="#fff" stroke="#222" stroke-width="0.5"/>
<rect x="300" y="150.8" width="3.4" height="3.4" fill="#fff" stroke="#222" stroke-width="0.5"/>
<!-- dim glows -->
<g filter="url(#b3)" fill="#141414"><ellipse cx="641" cy="537" rx="8" ry="9"/><ellipse cx="697" cy="574" rx="14" ry="14"/><ellipse cx="350" cy="592" rx="8" ry="8"/></g><g filter="url(#b3)" fill="#2a2a2a"><ellipse cx="41" cy="537" rx="4" ry="10"/><ellipse cx="41" cy="375" rx="4" ry="14"/></g>
</g>
</svg>

<!-- image window content -->
<svg class="a" style="left:40.8px;top:29.6px" width="10" height="10" viewBox="0 0 10 10"><rect x="0" y="0" width="7.4" height="9.4" fill="#4a90d9"/><rect x="0.9" y="1.8" width="5.8" height="6.4" fill="#d2e6fa"/><rect x="2.6" y="2.4" width="1.1" height="5.2" fill="#4078bc"/><rect x="4.6" y="2.4" width="1.3" height="5.2" fill="#4a84c8"/><rect x="0" y="0" width="9.8" height="1.5" fill="#3f7fc4"/><rect x="8.1" y="2.2" width="1.6" height="4.6" fill="#5c7aa0"/></svg>
<div class="t" style="left:55.3px;top:29.8px;font-size:9.8px;color:#8a8a8a;transform:scaleX(0.914);transform-origin:0 0">MF52_MF-BGU-LED</div>
<svg class="a" style="left:138.6px;top:29.9px" width="19.8" height="10.4" viewBox="0 0 21.06 11.06"><g fill="none" stroke="#8c8c8c" stroke-width="0.96"><path d="M2.2 0.6 L0.7 3.4 L3.2 3.4 L0.7 6.4 L3.9 5.7 M0.7 9.2 L3.9 8.2 M4.9 1.6 H9.4 V9.2 H4.9 Z M7.15 1.6 V9.2 M4.9 5.4 H9.4"/><g transform="translate(9.8 0)"><path d="M1.2 1.2 V7.6 Q1.2 9 0.4 9.6 M1.2 1.2 H3.8 V9.6 M1.2 4 H3.8 M1.2 6.6 H3.8 M6 0.6 L5 3 M5.6 2.2 H9.4 V7.4 Q9.4 8.4 8.4 8.4 M6.2 4.2 H8.2 V6.4 H6.2 Z M6.2 4.2 V9.2 H9.6"/></g></g></svg>
<div class="t" style="left:157.3px;top:29.8px;font-size:9.8px;color:#8a8a8a;transform:scaleX(0.94);transform-origin:0 0">.jpg (25%)</div>
<svg class="a" style="left:0;top:0" width="900" height="600"><g fill="none" stroke="#8a8a8a" stroke-width="1.0"><path d="M704 34.8H711.6"/><rect x="737.8" y="31.8" width="6.6" height="6.6" rx="1"/><path d="M771.5 31.3L778.9 38.5M778.9 31.3L771.5 38.5"/></g></svg>
<div class="t" style="left:37.8px;top:46.8px;font-size:8.9px;letter-spacing:-0.02px;color:#151515;-webkit-text-stroke:0.1px #151515">4088x3072 pixels; 8-bit; 12MB</div>

<!-- plot window -->
<div class="a" id="plotwin" style="left:51px;top:174px;width:518.5px;height:355px;background:#fff;border-radius:7px 7px 6px 6px">
  <div class="a" style="left:0;top:0;width:518.5px;height:22px;background:#f0f0f4;border-radius:7px 7px 0 0;border-top:1px solid #f8f8fa"></div>
  <div class="a" style="left:3px;top:33px;width:512.5px;height:298.5px;border-top:1px solid #333;border-left:1px solid #555;border-bottom:1.5px solid #383838;border-right:1.5px solid #8a8a8a;background:#fff"></div>
  <div class="a" style="left:41px;top:335px;width:476px;height:16px;background:#d9d9d9"></div>
</div>


<!-- plot window content -->
<svg class="a" style="left:58.0px;top:179.2px" width="10" height="10" viewBox="0 0 10 10"><rect x="0" y="0" width="7.4" height="9.4" fill="#4a90d9"/><rect x="0.9" y="1.8" width="5.8" height="6.4" fill="#d2e6fa"/><rect x="2.6" y="2.4" width="1.1" height="5.2" fill="#4078bc"/><rect x="4.6" y="2.4" width="1.3" height="5.2" fill="#4a84c8"/><rect x="0" y="0" width="9.8" height="1.5" fill="#3f7fc4"/><rect x="8.1" y="2.2" width="1.6" height="4.6" fill="#5c7aa0"/></svg>
<div class="t" style="left:72.4px;top:179.3px;font-size:9.8px;color:#151515;transform:scaleX(0.9305);transform-origin:0 0;-webkit-text-stroke:0.12px #151515">Plot of MF52_MF-BGU-LED</div>
<svg class="a" style="left:186px;top:179.6px" width="19" height="10" viewBox="0 0 21.04 11.04"><g fill="none" stroke="#1e1e1e" stroke-width="1.15"><path d="M2.2 0.6 L0.7 3.4 L3.2 3.4 L0.7 6.4 L3.9 5.7 M0.7 9.2 L3.9 8.2 M4.9 1.6 H9.4 V9.2 H4.9 Z M7.15 1.6 V9.2 M4.9 5.4 H9.4"/><g transform="translate(9.8 0)"><path d="M1.2 1.2 V7.6 Q1.2 9 0.4 9.6 M1.2 1.2 H3.8 V9.6 M1.2 4 H3.8 M1.2 6.6 H3.8 M6 0.6 L5 3 M5.6 2.2 H9.4 V7.4 Q9.4 8.4 8.4 8.4 M6.2 4.2 H8.2 V6.4 H6.2 Z M6.2 4.2 V9.2 H9.6"/></g></g></svg>
<svg class="a" style="left:0;top:0" width="900" height="600"><g fill="none" stroke="#222" stroke-width="1.2"><path d="M482 184.3H489.6"/><rect x="515.5" y="181.3" width="6.6" height="6.6" rx="1"/><path d="M548.9 180.8L556.3 188.0M556.3 180.8L548.9 188.0"/></g></svg>
<div class="t" style="left:55px;top:196.6px;font-size:8.9px;color:#151515;-webkit-text-stroke:0.1px #151515">271.44x112.88   (696x405); 8-bit; 275K</div>
<div class="a" style="left:58.5px;top:509.5px;width:29.3px;height:16.2px;background:#ededed;border-top:1px solid #f6f6f6;border-left:1px solid #f6f6f6;border-right:1.6px solid #8c8c8c;border-bottom:1.6px solid #8c8c8c"></div>
<div class="t" style="left:65.6px;top:512.8px;font-size:9.6px;color:#1a1a1a;-webkit-text-stroke:0.2px #1a1a1a">List</div>

<!-- plot svg -->
<svg class="a" style="left:0;top:0" width="900" height="600" viewBox="0 0 900 600">
<path d="M203.8 220.4V470.0M298.1 220.4V470.0M392.4 220.4V470.0M486.6 220.4V470.0M109.6 456.3H550.3M109.6 403.6H550.3M109.6 350.9H550.3M109.6 298.1H550.3M109.6 245.4H550.3" stroke="#cfcfcf" stroke-width="1" fill="none"/>
<path d="M109.6 470.0v-5M109.6 220.4v5M128.4 470.0v-3M128.4 220.4v3M147.3 470.0v-3M147.3 220.4v3M166.1 470.0v-3M166.1 220.4v3M185.0 470.0v-3M185.0 220.4v3M203.8 470.0v-5M203.8 220.4v5M222.7 470.0v-3M222.7 220.4v3M241.5 470.0v-3M241.5 220.4v3M260.4 470.0v-3M260.4 220.4v3M279.2 470.0v-3M279.2 220.4v3M298.1 470.0v-5M298.1 220.4v5M316.9 470.0v-3M316.9 220.4v3M335.8 470.0v-3M335.8 220.4v3M354.6 470.0v-3M354.6 220.4v3M373.5 470.0v-3M373.5 220.4v3M392.4 470.0v-5M392.4 220.4v5M411.2 470.0v-3M411.2 220.4v3M430.0 470.0v-3M430.0 220.4v3M448.9 470.0v-3M448.9 220.4v3M467.8 470.0v-3M467.8 220.4v3M486.6 470.0v-5M486.6 220.4v5M505.5 470.0v-3M505.5 220.4v3M524.3 470.0v-3M524.3 220.4v3M543.1 470.0v-3M543.1 220.4v3M109.6 469.5h3M550.3 469.5h-3M109.6 456.3h5M550.3 456.3h-5M109.6 443.1h3M550.3 443.1h-3M109.6 429.9h3M550.3 429.9h-3M109.6 416.8h3M550.3 416.8h-3M109.6 403.6h5M550.3 403.6h-5M109.6 390.4h3M550.3 390.4h-3M109.6 377.2h3M550.3 377.2h-3M109.6 364.0h3M550.3 364.0h-3M109.6 350.9h5M550.3 350.9h-5M109.6 337.7h3M550.3 337.7h-3M109.6 324.5h3M550.3 324.5h-3M109.6 311.3h3M550.3 311.3h-3M109.6 298.1h5M550.3 298.1h-5M109.6 285.0h3M550.3 285.0h-3M109.6 271.8h3M550.3 271.8h-3M109.6 258.6h3M550.3 258.6h-3M109.6 245.4h5M550.3 245.4h-5M109.6 232.2h3M550.3 232.2h-3" stroke="#333" stroke-width="1.3" fill="none"/>

<rect x="109.6" y="220.4" width="440.7" height="249.6" fill="none" stroke="#383838" stroke-width="1.6"/>
<path d="M109.8 463.5 L110.5 463.9 L113.7 466.3 L116.1 465.2 L119.3 466.3 L124 461.5 L127.2 460.7 L129.5 457.6 L131.9 452 L134.3 444.9 L136.7 437 L138.2 427.5 L139.8 414.8 L141.1 400.6 L142.2 389.5 L143 380 L144.7 342.5 L146.6 314 L148.2 300 L149.2 285.8 L150.6 268.8 L152.5 254.7 L154.2 244.7 L155.3 240.5 L157.7 235.5 L159.8 230.6 L161.2 226.3 L162.9 224.6 L164.8 226.3 L166.9 230.6 L169 234.1 L171.2 237 L173.3 239.8 L174.7 244.7 L176.1 254.7 L177.5 268.8 L179 283 L180.8 300 L183.3 320 L185.3 345 L186.7 365 L188.3 378.3 L190 390 L191.4 401.3 L192.8 409.8 L194.2 418.3 L195.6 424 L197.7 428.5 L200.6 430 L202.7 431.8 L204.1 437.5 L207.7 446 L211.2 451.6 L214 456.3 L216.9 457.7 L221.1 456.3 L224 457.7 L227.5 456.3 L231.7 455.4 L236 458 L241.7 462 L245.9 459.4 L250.9 460.5 L255.1 458 L258 455.9 L260.8 452.3 L262.7 454.4 L265.6 451.9 L268.1 450 L271.9 451 L275.6 453.5 L279.4 451.5 L282.5 453.1 L285 455 L289.4 456.25 L292.5 456 L294.8 454.4 L297.5 456.25 L300.6 453.75 L303.1 450.6 L305 446.9 L308.75 443.75 L312.5 445.25 L315.6 443.5 L318.75 443.75 L321.25 441.25 L323.1 438.75 L325.6 432.5 L328.1 426.25 L330 420 L331.5 412.5 L332.3 406.3 L335.8 377 L339.4 349.5 L342.2 322 L344.6 300 L345.9 287.5 L348 265 L350.7 243.2 L353.2 237.7 L357 235.7 L360 232 L362.2 229.7 L364.2 228.7 L366.7 232 L369.7 235.7 L371.2 257.5 L373.5 266.5 L375.7 275.5 L377.7 283.7 L379.5 285.2 L382.5 283.7 L386.2 286 L387.7 290.5 L389 301 L389.75 307.3 L391.9 326.8 L394.1 346.3 L397.3 362.6 L401.2 370.6 L404.9 370.6 L409.25 376.7 L413.6 387.5 L419 397.3 L422.25 404.2 L425.5 391.8 L428.75 372.3 L432 355 L434.2 350.7 L435.9 353.9 L438.1 359.8 L441.75 360.4 L444.6 363.7 L448.25 372.3 L451.5 377.1 L453.7 379.3 L457.3 382.9 L461.9 381.7 L467.4 386 L471.1 388.4 L473.85 395.8 L476.6 409.5 L479.4 424.2 L483 435.2 L486.7 444.4 L490.4 448.1 L495 446.2 L499.5 445.3 L502.3 446.2 L506 444 L510.3 438.2 L512.6 439.4 L515.5 444.6 L518.4 448.2 L522.5 445.8 L525.4 439.4 L529.5 433 L532.45 435.3 L534.8 437.6 L537.1 435.3 L540 433.55 L541.8 428.9 L544.1 420.7 L546.5 416 L548.2 413.9 L549.4 415.4 L550.3 417.2" fill="none" stroke="#363636" stroke-width="1.1" stroke-linejoin="round"/>
<g font-family="Liberation Sans" font-size="10.2" fill="#333">
<text x="104" y="249.1" text-anchor="end">100</text>
<text x="104" y="301.8" text-anchor="end">80</text>
<text x="104" y="354.6" text-anchor="end">60</text>
<text x="104" y="407.3" text-anchor="end">40</text>
<text x="104" y="460.0" text-anchor="end">20</text>
<text x="109.6" y="484.6" text-anchor="middle">0</text>
<text x="203.8" y="484.6" text-anchor="middle">50</text>
<text x="298.1" y="484.6" text-anchor="middle">100</text>
<text x="392.4" y="484.6" text-anchor="middle">150</text>
<text x="486.6" y="484.6" text-anchor="middle">200</text>
<text x="330.3" y="498.7" text-anchor="middle">Distance (pixels)</text>
<text transform="translate(82.5 345.3) rotate(-90)" text-anchor="middle">Gray Value</text>
</g>
</svg>

<!-- popup menu -->
<div class="a" id="menu" style="left:92px;top:509px;width:152px;height:100px;background:#f0f0f0;border:1px solid #a0a0a0;box-shadow:2px 2px 2px rgba(0,0,0,.35)">
  <div class="a" style="left:1px;top:44.2px;width:148.3px;height:21.4px;background:#0078d7"></div>
</div>


<div class="t" style="left:106.7px;top:517.0px;font-size:11px;letter-spacing:-0.14px;color:#1a1a1a">Save Data...</div>
<div class="t" style="left:106.7px;top:538.6px;font-size:11px;letter-spacing:-0.14px;color:#1a1a1a">Copy 1st Data Set</div>
<div class="t" style="left:106.7px;top:560.2px;font-size:11px;letter-spacing:-0.14px;color:#ffffff">Copy All Data</div>
<div class="t" style="left:106.7px;top:581.8px;font-size:11px;letter-spacing:-0.14px;color:#1a1a1a">List (Simple Headings)</div>
<div class="a" style="left:94px;top:598px;width:148px;height:1px;background:#a0a0a0"></div>
</body></html>
